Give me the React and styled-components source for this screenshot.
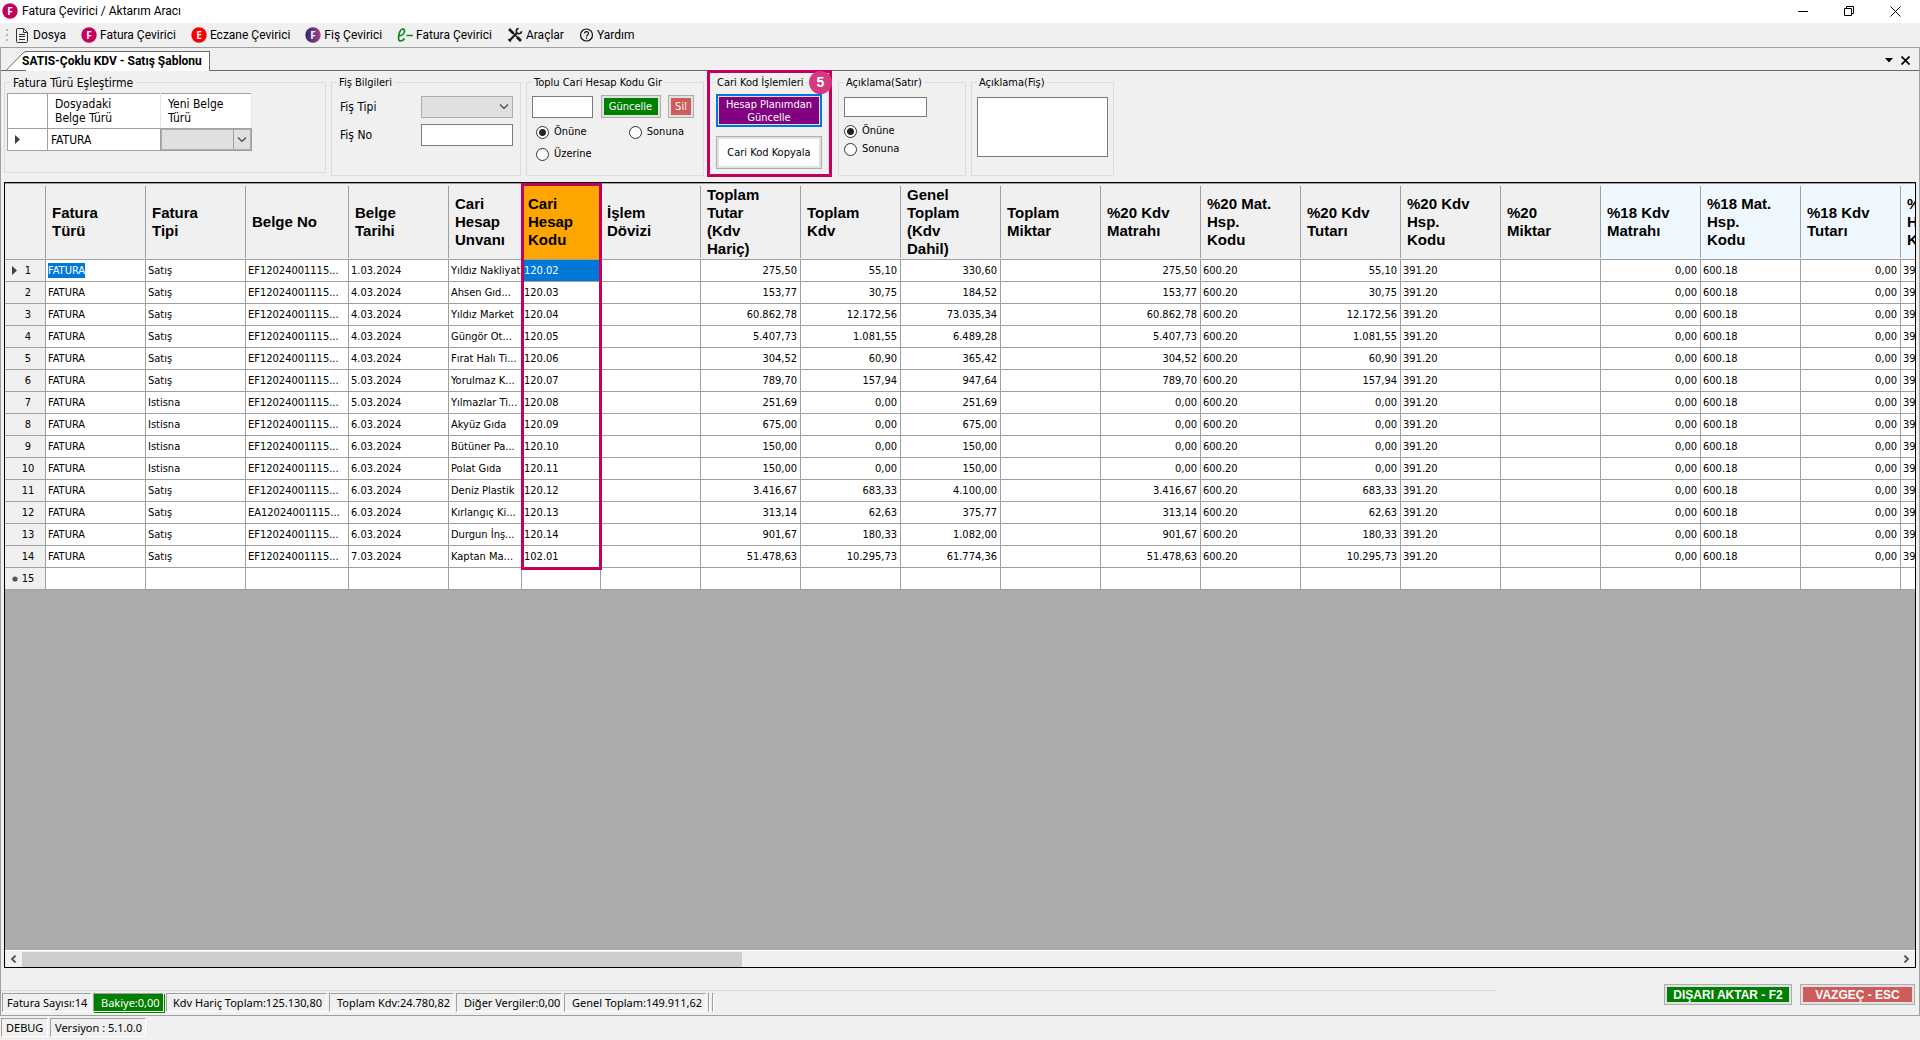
import React, { useState } from 'react'
import styled, { createGlobalStyle, css } from 'styled-components'

const ui = 'Roboto, "Open Sans", sans-serif'
const small = '"DejaVu Sans Condensed", "Noto Sans", sans-serif'
const pink = '#c4005f'

const GlobalStyle = createGlobalStyle`
  * {
    box-sizing: border-box;
  }
  body {
    margin: 0;
    background: #f0f0f0;
    color: #000;
    font: 11px/14px ${small};
  }
  button, input, select, textarea {
    font: inherit;
    color: inherit;
    margin: 0;
  }
`

const Window = styled.div`
  display: flex;
  flex-direction: column;
  height: 100vh;
  overflow: hidden;
`

const TitleBar = styled.header`
  display: flex;
  align-items: center;
  height: 23px;
  flex: none;
  padding: 0 9px 1px 2px;
  background: #fff;
  font: 12px/16px ${ui};
`

const Title = styled.h1`
  flex: 1;
  margin: 0 0 0 4px;
  font: inherit;
`

const WindowButtons = styled.div`
  display: flex;
  gap: 14px;
`

const BareButton = styled.button`
  display: flex;
  align-items: center;
  justify-content: center;
  width: ${p => p.$width || 16}px;
  height: 16px;
  padding: 0;
  border: 0;
  background: none;
`

const Menu = styled.nav`
  display: flex;
  align-items: center;
  gap: 15px;
  height: 24px;
  flex: none;
  padding-left: 6px;
`

const Grip = styled.span`
  width: 2px;
  height: 12px;
  margin-right: -8px;
  background: repeating-linear-gradient(#b8b8b8 0 2px, transparent 2px 5px);
`

const MenuItem = styled.button`
  display: flex;
  align-items: center;
  gap: 3px;
  padding: 0;
  border: 0;
  background: none;
  font: 12px/16px ${ui};
`

const Page = styled.main`
  display: flex;
  flex-direction: column;
  flex: 1;
  min-height: 0;
  border: 1px solid #a0a0a0;
`

const TabStrip = styled.div`
  display: flex;
  justify-content: space-between;
  align-items: center;
  flex: none;
  height: 23px;
  padding: 3px 6px 0 5px;
  border-bottom: 1px solid #696969;
`

const Tab = styled.button`
  position: relative;
  height: 20px;
  margin-bottom: -1px;
  padding: 0 7px 1px 16px;
  border: solid #696969;
  border-width: 1px 1px 0 0;
  border-image: linear-gradient(to right, transparent 20px, #696969 20px) 1;
  background: linear-gradient(to right, transparent 20px, #fff 20px);
  font: bold 12px/16px ${ui};
`

const Slant = styled.svg`
  position: absolute;
  left: 0;
  top: -1px;
  z-index: -1;
`

const TabTools = styled.div`
  display: flex;
`

const Tools = styled.div`
  display: flex;
  align-items: flex-start;
  gap: 5px;
  flex: none;
  padding: 4px 3px 6px;
`

const Group = styled.fieldset`
  position: relative;
  width: ${p => p.$width}px;
  height: ${p => p.$height || 101}px;
  margin: 0;
  padding: 0 ${p => p.$side || 5}px;
  border: 1px solid #dcdcdc;

  ${p =>
    p.$marked &&
    css`
      margin-right: 4px;

      &::after {
        content: '';
        position: absolute;
        inset: -19px -4px -2px -3px;
        border: 3px solid ${pink};
        pointer-events: none;
      }
    `}
`

const Legend = styled.legend`
  height: 14px;
  padding: 0 2px;
  font-size: ${p => (p.$large ? 12 : 11)}px;
  line-height: 16px;
`

const Badge = styled.span`
  position: absolute;
  z-index: 1;
  right: -4px;
  top: -18px;
  width: 23px;
  height: 23px;
  border-radius: 50%;
  background: #d53a80;
  color: #fff;
  font: bold 14px/23px "Liberation Sans", sans-serif;
  text-align: center;
`

const MapTable = styled.table`
  width: 245px;
  margin: 4px 0 0 -4px;
  border-collapse: collapse;
  table-layout: fixed;
  background: #fff;
  font-size: 12px;

  th, td {
    padding: 0 3px;
    border: 1px solid #a0a0a0;
    text-align: left;
    font-weight: normal;
  }
  thead th {
    height: 35px;
    padding: 0 7px;
    border-right-color: #e5e5e5;
    white-space: pre-line;
  }
  thead td {
    width: 40px;
  }
  tbody tr {
    height: 22px;
  }
  tbody td:first-child {
    padding-left: 7px;
  }
  tbody td:last-child {
    padding: 0;
  }
`

const SelectBox = styled.span`
  display: grid;
  align-items: center;
  height: ${p => p.$height || 22}px;

  select, svg {
    grid-area: 1 / 1;
  }
  select {
    width: 100%;
    height: 100%;
    appearance: none;
    border: 1px solid #adadad;
    border-radius: 0;
    background: #e0e0e0;
    opacity: 1;
  }
  svg {
    justify-self: end;
    margin-right: 4px;
    pointer-events: none;
  }

  ${p =>
    p.$split &&
    css`
      select {
        background: linear-gradient(#a0a0a0, #a0a0a0) right 16px top / 1px 100% no-repeat #e0e0e0;
      }
    `}
`

const Fields = styled.div`
  display: grid;
  grid-template-columns: 79px 92px;
  align-items: center;
  gap: 6px 2px;
  padding: 7px 0 0 3px;
  font-size: 12px;
`

const textBox = css`
  width: ${p => p.$width}px;
  height: ${p => p.$height || 22}px;
  padding: 1px 3px;
  border: 1px solid #7a7a7a;
  border-radius: 0;
  background: #fff;
`

const TextBox = styled.input`
  ${textBox}
`

const TextArea = styled.textarea`
  ${textBox}
  display: block;
  margin-top: 8px;
  resize: none;
`

const Row = styled.div`
  display: flex;
  align-items: center;
  justify-content: space-between;
  padding: ${p => p.$pad || '0'};
`

const PushButton = styled.button`
  display: block;
  width: ${p => p.$width}px;
  height: ${p => p.$height || 23}px;
  padding: 0;
  border: ${p => (p.$focused ? '2px solid #0078d7' : '1px solid #adadad')};
  background: ${p => p.$color};
  box-shadow: inset 0 0 0 ${p => (p.$focused ? 1 : 2)}px #e1e1e1;
  color: ${p => (p.$dark ? '#000' : '#fff')};
  line-height: 13px;
  white-space: pre-line;
  ${p => p.$bold && 'font: bold 12px/14px "Liberation Sans", sans-serif;'}
`

const Stack = styled.div`
  display: flex;
  flex-direction: column;
  align-items: center;
  gap: 9px;
  padding-top: 5px;
`

const RadioLabel = styled.label`
  display: flex;
  align-items: center;
  gap: 5px;
  height: 18px;

  input {
    appearance: none;
    width: 13px;
    height: 13px;
    border: 1px solid #333;
    border-radius: 50%;
    background: #fff;
  }
  input:checked {
    background: radial-gradient(circle, #222 3px, #fff 4px);
  }
`

const RadioRow = styled.div`
  display: flex;
  justify-content: space-between;
  padding: ${p => p.$pad || '0'};
`

const Grid = styled.section`
  display: flex;
  flex-direction: column;
  flex: 1;
  min-height: 0;
  margin: 0 3px;
  border: 1px solid #000;
  background: #ababab;
`

const GridBody = styled.div`
  flex: 1;
  min-height: 0;
  overflow: hidden;
`

const DataTable = styled.table`
  width: 100%;
  table-layout: fixed;
  border-collapse: separate;
  border-spacing: 0;
`

const cellLine = css`
  height: 22px;
  padding: 0 3px 0 2px;
  border: solid #a0a0a0;
  border-width: 0 1px 1px 0;
  white-space: nowrap;
  overflow: hidden;
`

const HeadCell = styled.th`
  position: relative;
  height: 77px;
  padding: 0 0 0 6px;
  border: solid #a0a0a0;
  border-width: 1px 0;
  background: linear-gradient(#a0a0a0, #a0a0a0) right center / 1px 72px no-repeat
    ${p => p.$fill || '#f0f0f0'};
  font: bold 15px/18px "Liberation Sans", Arial, sans-serif;
  text-align: left;
  white-space: pre-line;
`

// frame drawn over the account code column: header plus the filled rows
const ColumnMark = styled.span`
  position: absolute;
  z-index: 1;
  top: -1px;
  left: -1px;
  right: -1px;
  height: 387px;
  border: 3px solid ${pink};
  pointer-events: none;
`

const RowHead = styled.th`
  ${cellLine}
  padding: 0 9px 0 7px;
  background: #f0f0f0;
  font-weight: normal;

  span {
    display: flex;
    align-items: center;
    justify-content: space-between;
  }
  svg {
    flex: none;
  }
  b {
    flex: 1;
    padding-left: 2px;
    font-weight: normal;
    text-align: center;
  }
`

const Cell = styled.td`
  ${cellLine}
  background: ${p => (p.$selected ? '#0078d7' : '#fff')};
  color: ${p => (p.$selected ? '#fff' : '#000')};
  text-align: ${p => (p.$right ? 'right' : 'left')};
`

const Marked = styled.mark`
  padding: 1px 0;
  background: #0078d7;
  color: #fff;
`

const ScrollBar = styled.div`
  display: flex;
  align-items: center;
  flex: none;
  height: 17px;
  border-top: 1px solid #fff;
  background: #f0f0f0;
`

const Track = styled.div`
  flex: 1;
  height: 15px;
`

const Thumb = styled.div`
  width: 38.4%;
  height: 100%;
  background: #cdcdcd;
`

const Footer = styled.footer`
  display: flex;
  justify-content: space-between;
  flex: none;
  height: 47px;
`

const Totals = styled.div`
  display: flex;
  align-items: flex-start;
  gap: 2px;
  width: 78%;
  margin-top: 22px;
  padding: 2px 0 0 1px;
  border-top: 1px solid #d7d7d7;
`

const Panel = styled.span`
  flex: none;
  width: ${p => p.$width}px;
  height: 19px;
  padding-left: ${p => p.$pad}px;
  border: 1px solid;
  border-color: #a0a0a0 #fff #fff #a0a0a0;
  background: ${p => (p.$green ? '#008000' : 'transparent')};
  color: ${p => (p.$green ? '#fff' : '#000')};
  box-shadow: ${p => (p.$green ? '1px 1px 0 #008000' : 'none')};
  font: 11px/17px "Noto Sans", "Open Sans", sans-serif;
  white-space: nowrap;
`

const Actions = styled.div`
  display: flex;
  gap: 8px;
  padding: 16px 4px 0 0;
`

const StatusBar = styled.div`
  display: flex;
  gap: 2px;
  flex: none;
  height: 24px;
  padding: 2px 0 0 1px;
`

const CircleIcon = ({ letter, color, gradient }) => (
  <svg width="16" height="16" viewBox="0 0 16 16">
    {gradient && (
      <linearGradient id="purple" x1="0" x2="1" y1="0" y2="0">
        <stop offset="0" stopColor="#30246e" />
        <stop offset="1" stopColor="#a04489" />
      </linearGradient>
    )}
    <circle cx="8" cy="8" r="7.7" fill={gradient ? 'url(#purple)' : color} />
    <text x="8" y="11.5" fill="#fff" textAnchor="middle" fontSize="10" fontWeight="bold" fontFamily="Open Sans">
      {letter}
    </text>
  </svg>
)

const DocIcon = () => (
  <svg width="15" height="16" viewBox="0 0 15 16" fill="none" stroke="#333">
    <path d="M2 1.5h6.5l4 4v9a1 1 0 0 1-1 1h-9a1 1 0 0 1-1-1V2zM8.5 1.5v4h4M4 7.5h6M4 9.5h6M4 12.5h6" />
  </svg>
)

const EIcon = () => (
  <svg width="16" height="16" viewBox="0 0 16 16" fill="none" stroke="#0b8a1c" strokeWidth="1.7">
    <path d="M2 9c3.500-.5 6-3 5.500-5.500C7 1 4 1.500 2.700 5 1 9.500 1 14 3.500 14c2 0 3.200-1.200 4-2.500M9.500 8.500H16" />
  </svg>
)

const ToolsIcon = () => (
  <svg width="16" height="16" viewBox="0 0 16 16" fill="none" stroke="#1a1a1a">
    <path d="M2 2l4.5 4.5" strokeWidth="2.6" />
    <path d="M6 6l4 4" strokeWidth="1.2" />
    <path d="M10 10l4 4" strokeWidth="2.8" />
    <path d="M2 14l8-8" strokeWidth="2.2" />
    <path d="M14.5 4.200A2.600 2.600 0 1 1 11.700 1.500M1.500 12l2.500 2.500" strokeWidth="1.6" />
  </svg>
)

const HelpIcon = () => (
  <svg width="15" height="16" viewBox="0 0 15 16" fill="none" stroke="#111" strokeWidth="1.2">
    <circle cx="7.5" cy="8" r="6" />
    <path d="M5.5 6.6c0-2.600 4-2.600 4 0 0 1.400-2 1.300-2 2.900M7.500 10.500v1.400" />
  </svg>
)

const Chevron = () => (
  <svg width="10" height="6" viewBox="0 0 10 6" fill="none" stroke="#444" strokeWidth="1.2">
    <path d="M1 .5l4 4 4-4" />
  </svg>
)

const Arrow = () => (
  <svg width="6" height="9" viewBox="0 0 6 9">
    <path d="M0 0v9l5-4.500z" fill="#404040" />
  </svg>
)

const ScrollArrow = ({ right }) => (
  <svg width="7" height="8" viewBox="0 0 7 8" fill="none" stroke="#505050" strokeWidth="1.8">
    <path d={right ? 'M1.5 .5L5 4 1.5 7.500' : 'M5.5 .5L2 4l3.500 3.500'} />
  </svg>
)

const Radio = ({ label, ...rest }) => (
  <RadioLabel>
    <input type="radio" {...rest} />
    {label}
  </RadioLabel>
)

const menu = [
  ['Dosya', <DocIcon />],
  ['Fatura Çevirici', <CircleIcon letter="F" color="#c4005f" />],
  ['Eczane Çevirici', <CircleIcon letter="E" color="#f80000" />],
  ['Fiş Çevirici', <CircleIcon letter="F" gradient />],
  ['Fatura Çevirici', <EIcon />],
  ['Araçlar', <ToolsIcon />],
  ['Yardım', <HelpIcon />],
]

const blue = '#f0f8ff'
const columns = [
  { title: 'Fatura\nTürü' },
  { title: 'Fatura\nTipi' },
  { title: 'Belge No', width: 103 },
  { title: 'Belge\nTarihi' },
  { title: 'Cari\nHesap\nUnvanı', width: 73 },
  { title: 'Cari\nHesap\nKodu', width: 79, fill: '#ffa500', marked: true },
  { title: 'İşlem\nDövizi' },
  { title: 'Toplam\nTutar\n(Kdv\nHariç)', right: true },
  { title: 'Toplam\nKdv', right: true },
  { title: 'Genel\nToplam\n(Kdv\nDahil)', right: true },
  { title: 'Toplam\nMiktar' },
  { title: '%20 Kdv\nMatrahı', right: true },
  { title: '%20 Mat.\nHsp.\nKodu' },
  { title: '%20 Kdv\nTutarı', right: true },
  { title: '%20 Kdv\nHsp.\nKodu' },
  { title: '%20\nMiktar' },
  { title: '%18 Kdv\nMatrahı', right: true, fill: blue },
  { title: '%18 Mat.\nHsp.\nKodu', fill: blue },
  { title: '%18 Kdv\nTutarı', right: true, fill: blue },
  { title: '%18 Kdv\nHsp.\nKodu', fill: blue },
]

// type, date, customer, code, net, vat, gross, base 20, vat 20
const invoices = [
  ['Satış', '1.03.2024', 'Yıldız Nakliyat', '120.02', '275,50', '55,10', '330,60', '275,50', '55,10'],
  ['Satış', '4.03.2024', 'Ahsen Gıd...', '120.03', '153,77', '30,75', '184,52', '153,77', '30,75'],
  ['Satış', '4.03.2024', 'Yıldız Market', '120.04', '60.862,78', '12.172,56', '73.035,34', '60.862,78', '12.172,56'],
  ['Satış', '4.03.2024', 'Güngör Ot...', '120.05', '5.407,73', '1.081,55', '6.489,28', '5.407,73', '1.081,55'],
  ['Satış', '4.03.2024', 'Fırat Halı Ti...', '120.06', '304,52', '60,90', '365,42', '304,52', '60,90'],
  ['Satış', '5.03.2024', 'Yorulmaz K...', '120.07', '789,70', '157,94', '947,64', '789,70', '157,94'],
  ['Istisna', '5.03.2024', 'Yılmazlar Ti...', '120.08', '251,69', '0,00', '251,69', '0,00', '0,00'],
  ['Istisna', '6.03.2024', 'Akyüz Gıda', '120.09', '675,00', '0,00', '675,00', '0,00', '0,00'],
  ['Istisna', '6.03.2024', 'Bütüner Pa...', '120.10', '150,00', '0,00', '150,00', '0,00', '0,00'],
  ['Istisna', '6.03.2024', 'Polat Gıda', '120.11', '150,00', '0,00', '150,00', '0,00', '0,00'],
  ['Satış', '6.03.2024', 'Deniz Plastik', '120.12', '3.416,67', '683,33', '4.100,00', '3.416,67', '683,33'],
  ['Satış', '6.03.2024', 'Kırlangıç Ki...', '120.13', '313,14', '62,63', '375,77', '313,14', '62,63'],
  ['Satış', '6.03.2024', 'Durgun İnş...', '120.14', '901,67', '180,33', '1.082,00', '901,67', '180,33'],
  ['Satış', '7.03.2024', 'Kaptan Ma...', '102.01', '51.478,63', '10.295,73', '61.774,36', '51.478,63', '10.295,73'],
]

const toCells = ([type, date, name, code, net, vat, gross, base, vat20], i) => [
  'FATURA', type, i === 11 ? 'EA12024001115...' : 'EF12024001115...', date, name, code, '',
  net, vat, gross, '', base, '600.20', vat20, '391.20', '', '0,00', '600.18', '0,00', '391.18',
]

const rows = [...invoices.map(toCells), columns.map(() => '')]

const InvoiceTable = () => (
  <DataTable>
    <colgroup>
      <col width={41} />
      {columns.map((c, i) => (
        <col key={i} width={c.width || 100} />
      ))}
    </colgroup>
    <thead>
      <tr>
        <HeadCell />
        {columns.map((c, i) => (
          <HeadCell key={i} $fill={c.fill}>
            {c.title}
            {c.marked && <ColumnMark />}
          </HeadCell>
        ))}
      </tr>
    </thead>
    <tbody>
      {rows.map((row, i) => (
        <tr key={i}>
          <RowHead>
            <span>
              {i === 0 && <Arrow />}
              {i === 14 && (
                <svg width="6" height="6" viewBox="0 0 6 6">
                  <circle cx="3" cy="3" r="2.6" fill="#555" />
                </svg>
              )}
              {i > 0 && i < 14 && <svg width="6" height="6" />}
              <b>{i + 1}</b>
            </span>
          </RowHead>
          {row.map((text, j) => (
            <Cell key={j} $right={columns[j].right} $selected={i === 0 && j === 5}>
              {i === 0 && j === 0 ? <Marked>{text}</Marked> : text}
            </Cell>
          ))}
        </tr>
      ))}
    </tbody>
  </DataTable>
)

const App = () => {
  const [place, setPlace] = useState('Önüne')
  const [linePlace, setLinePlace] = useState('Önüne')

  const placeRadio = label => (
    <Radio label={label} name="place" checked={place === label} onChange={() => setPlace(label)} />
  )
  const lineRadio = label => (
    <Radio label={label} name="line" checked={linePlace === label} onChange={() => setLinePlace(label)} />
  )

  return (
    <Window>
      <GlobalStyle />
      <TitleBar>
        <CircleIcon letter="F" color="#c4005f" />
        <Title>Fatura Çevirici / Aktarım Aracı</Title>
        <WindowButtons>
          <BareButton $width={32} aria-label="Simge durumuna küçült">
            <svg width="10" height="10"><path d="M0 5.5h10" stroke="#000" /></svg>
          </BareButton>
          <BareButton $width={32} aria-label="Önceki boyut">
            <svg width="11" height="11" fill="none" stroke="#000">
              <path d="M.5 2.5h7v7h-7zM2.5 2.5v-2h7v7h-2" />
            </svg>
          </BareButton>
          <BareButton $width={32} aria-label="Kapat">
            <svg width="11" height="11" stroke="#000"><path d="M.5 .5l10 10M10.5 .5l-10 10" /></svg>
          </BareButton>
        </WindowButtons>
      </TitleBar>

      <Menu>
        <Grip />
        {menu.map(([text, icon], i) => (
          <MenuItem key={i}>
            {icon}
            {text}
          </MenuItem>
        ))}
      </Menu>

      <Page>
        <TabStrip>
          <Tab>
            <Slant width="22" height="20" viewBox="0 0 22 20">
              <path d="M0 20L17 2q1.500-1.500 5-1.500V20z" fill="#fff" />
              <path d="M0 19.5L17 2q1.500-1.500 5-1.500" fill="none" stroke="#696969" />
            </Slant>
            SATIS-Çoklu KDV - Satış Şablonu
          </Tab>
          <TabTools>
            <BareButton aria-label="Sekme listesi">
              <svg width="8" height="5"><path d="M0 0h8L4 4.500z" /></svg>
            </BareButton>
            <BareButton aria-label="Sekmeyi kapat">
              <svg width="9" height="9" stroke="#000" strokeWidth="1.7"><path d="M.5 .5l8 8M8.5 .5l-8 8" /></svg>
            </BareButton>
          </TabTools>
        </TabStrip>

        <Tools>
          <Group $width={322} $height={98} $side={6}>
            <Legend $large>Fatura Türü Eşleştirme</Legend>
            <MapTable>
              <thead>
                <tr>
                  <td />
                  <th>{'Dosyadaki\nBelge Türü'}</th>
                  <th width="91">{'Yeni Belge\nTürü'}</th>
                </tr>
              </thead>
              <tbody>
                <tr>
                  <td><Arrow /></td>
                  <td>FATURA</td>
                  <td>
                    <SelectBox $height={21} $split>
                      <select aria-label="Yeni Belge Türü" />
                      <Chevron />
                    </SelectBox>
                  </td>
                </tr>
              </tbody>
            </MapTable>
          </Group>

          <Group $width={190}>
            <Legend>Fiş Bilgileri</Legend>
            <Fields>
              <label htmlFor="slipType">Fiş Tipi</label>
              <SelectBox>
                <select id="slipType" />
                <Chevron />
              </SelectBox>
              <label htmlFor="slipNo">Fiş No</label>
              <TextBox id="slipNo" $width={92} />
            </Fields>
          </Group>

          <Group $width={178}>
            <Legend>Toplu Cari Hesap Kodu Gir</Legend>
            <Row $pad="6px 4px 4px 0">
              <TextBox aria-label="Cari hesap kodu" $width={61} />
              <PushButton $width={60} $color="#008000">Güncelle</PushButton>
              <PushButton $width={26} $color="#cd5c5c">Sil</PushButton>
            </Row>
            <RadioRow $pad="1px 14px 4px 4px">
              {placeRadio('Önüne')}
              {placeRadio('Sonuna')}
            </RadioRow>
            <RadioRow $pad="0 4px">{placeRadio('Üzerine')}</RadioRow>
          </Group>

          <Group $width={120} $marked>
            <Legend>Cari Kod İşlemleri</Legend>
            <Badge>5</Badge>
            <Stack>
              <PushButton $width={106} $height={33} $color="#800080" $focused>
                {'Hesap Planımdan\nGüncelle'}
              </PushButton>
              <PushButton $width={106} $height={33} $color="#fff" $dark>
                Cari Kod Kopyala
              </PushButton>
            </Stack>
          </Group>

          <Group $width={128}>
            <Legend>Açıklama(Satır)</Legend>
            <Row $pad="8px 0 5px">
              <TextBox aria-label="Açıklama satır" $width={83} $height={20} />
            </Row>
            {lineRadio('Önüne')}
            {lineRadio('Sonuna')}
          </Group>

          <Group $width={143}>
            <Legend>Açıklama(Fiş)</Legend>
            <TextArea aria-label="Açıklama fiş" $width={131} $height={60} />
          </Group>
        </Tools>

        <Grid>
          <GridBody>
            <InvoiceTable />
          </GridBody>
          <ScrollBar>
            <BareButton $width={17} aria-label="Sola kaydır"><ScrollArrow /></BareButton>
            <Track><Thumb /></Track>
            <BareButton $width={17} aria-label="Sağa kaydır"><ScrollArrow right /></BareButton>
          </ScrollBar>
        </Grid>

        <Footer>
          <Totals>
            <Panel $width={89} $pad={4}>Fatura Sayısı:14</Panel>
            <Panel $width={71} $pad={7} $green>Bakiye:0,00</Panel>
            <Panel $width={161} $pad={6}>Kdv Hariç Toplam:125.130,80</Panel>
            <Panel $width={125} $pad={7}>Toplam Kdv:24.780,82</Panel>
            <Panel $width={106} $pad={7}>Diğer Vergiler:0,00</Panel>
            <Panel $width={142} $pad={7}>Genel Toplam:149.911,62</Panel>
            <Panel $width={2} $pad={0} />
            <Panel $width={2} $pad={0} />
          </Totals>
          <Actions>
            <PushButton $width={128} $height={21} $color="#008000" $bold>DIŞARI AKTAR - F2</PushButton>
            <PushButton $width={115} $height={21} $color="#cd5c5c" $bold>VAZGEÇ - ESC</PushButton>
          </Actions>
        </Footer>
      </Page>

      <StatusBar>
        <Panel $width={47} $pad={4}>DEBUG</Panel>
        <Panel $width={96} $pad={4}>Versiyon : 5.1.0.0</Panel>
      </StatusBar>
    </Window>
  )
}

export default App
